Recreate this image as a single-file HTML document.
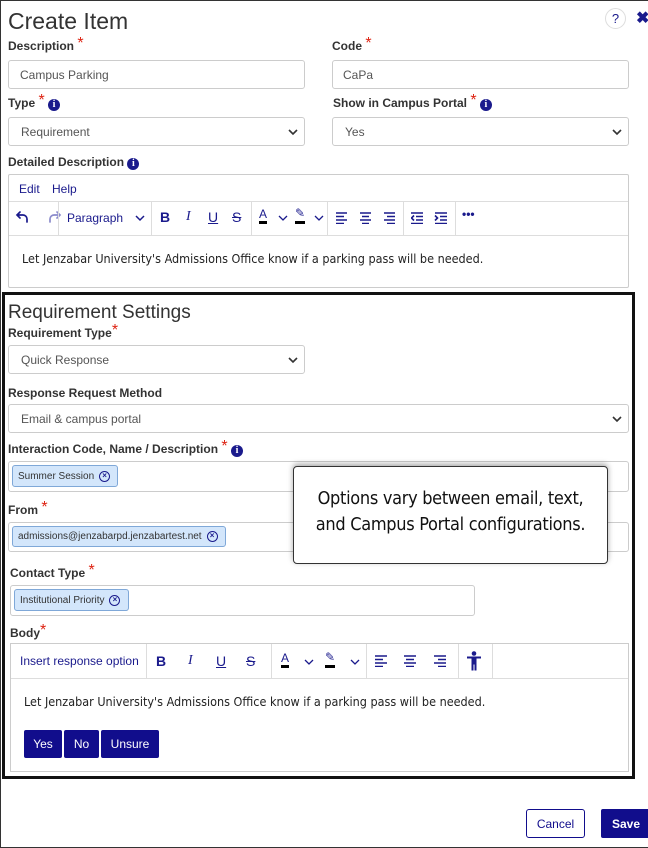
<!DOCTYPE html>
<html><head><style>
*{box-sizing:border-box;margin:0;padding:0}
body{width:648px;height:848px;position:relative;background:#fff;font-family:"Liberation Sans",Arial,sans-serif;overflow:hidden;color:#333}
.a{position:absolute}
.lbl{position:absolute;font-size:12px;font-weight:bold;color:#333}
.st{color:#d21;font-weight:normal;font-size:16px;position:relative;top:-2px;line-height:10px}
.inp{position:absolute;border:1px solid #ccc;border-radius:3px;background:#fff;font-size:12px;color:#555;padding-left:12px;display:flex;align-items:center}
.chev{position:absolute;right:6px;top:50%;margin-top:-5px}
.info{display:inline-block;width:12px;height:12px;border-radius:50%;background:#1a1a8c;color:#fff;font-size:10px;font-weight:bold;text-align:center;line-height:12px;font-family:"Liberation Serif",serif;vertical-align:0}
.chip{position:absolute;background:#d3e6fb;border:1px solid #7fa8d8;border-radius:3px;font-size:10px;color:#333;display:flex;align-items:center;padding-left:5px}
.x{display:inline-block;width:11px;height:11px;border:1.5px solid #1a1a8c;border-radius:50%;font-size:8px;line-height:8px;text-align:center;color:#1a1a8c;font-weight:bold;margin-left:5px}
.tb{position:absolute;color:#1a1a8c;font-size:14px}
.sep{position:absolute;width:1px;background:#ddd}
.btn{position:absolute;background:#110d8c;color:#fff;font-size:12px;border-radius:2px;display:flex;align-items:center;justify-content:center}
</style></head><body>
<div class="a" style="left:0;top:0;width:648px;height:848px;border:1px solid #333;border-right:none"></div>
<div class="a" style="left:8px;top:8px;font-size:23px;color:#333;font-weight:300">Create Item</div>
<div class="a" style="left:605px;top:8px;width:21px;height:21px;border:1px solid #ddd;border-radius:50%;color:#1a1a8c;font-size:13px;text-align:center;line-height:19px">?</div>
<div class="a" style="left:636px;top:8px;color:#1a1a8c;font-size:16px;font-weight:bold">✖</div>

<div class="lbl" style="left:8px;top:39px">Description <span class="st">*</span></div>
<div class="lbl" style="left:332px;top:39px">Code <span class="st">*</span></div>
<div class="inp" style="left:8px;top:60px;width:297px;height:29px;padding-left:11px">Campus Parking</div>
<div class="inp" style="left:332px;top:60px;width:297px;height:29px;padding-left:10px">CaPa</div>
<div class="lbl" style="left:8px;top:96px">Type <span class="st">*</span> <span class="info">i</span></div>
<div class="lbl" style="left:333px;top:96px">Show in Campus Portal <span class="st">*</span> <span class="info">i</span></div>
<div class="inp" style="left:8px;top:117px;width:297px;height:29px">Requirement<svg class="chev" width="10" height="10"><path d="M1 3l4 4 4-4" stroke="#333" stroke-width="1.6" fill="none"/></svg></div>
<div class="inp" style="left:332px;top:117px;width:297px;height:29px">Yes<svg class="chev" width="10" height="10"><path d="M1 3l4 4 4-4" stroke="#333" stroke-width="1.6" fill="none"/></svg></div>
<div class="lbl" style="left:8px;top:155px">Detailed Description <span class="info">i</span></div>

<div class="a" style="left:8px;top:174px;width:621px;height:114px;border:1px solid #ccc;border-radius:2px"></div>
<div class="a" style="left:9px;top:201px;width:619px;height:1px;background:#ddd"></div>
<div class="a" style="left:9px;top:235px;width:619px;height:1px;background:#ddd"></div>
<div class="a" style="left:19px;top:182px;font-size:12px;color:#1a1a8c">Edit</div>
<div class="a" style="left:52px;top:182px;font-size:12px;color:#1a1a8c">Help</div>
<svg class="a" style="left:15px;top:209px" width="60" height="16"><g fill="none" stroke-width="1.7" stroke-linecap="round"><path d="M5 3L2 6l3 3M2 6h6a4 4 0 0 1 4 4v3" stroke="#1a1a8c"/><path d="M42 3l3 3-3 3M45 6h-6a4 4 0 0 0-4 4v3" stroke="#8a8acb"/></g></svg>
<div class="sep" style="left:58px;top:202px;height:33px"></div>
<div class="tb" style="left:67px;top:211px;font-size:12px">Paragraph</div>
<svg class="a" style="left:135px;top:213px" width="10" height="10"><path d="M1 3l4 4 4-4" stroke="#1a1a8c" stroke-width="1.5" fill="none"/></svg>
<div class="sep" style="left:151px;top:202px;height:33px"></div>
<div class="tb" style="left:160px;top:209px;font-weight:bold">B</div>
<div class="tb" style="left:186px;top:209px;font-style:italic;font-family:'Liberation Serif',serif">I</div>
<div class="tb" style="left:208px;top:209px;text-decoration:underline">U</div>
<div class="tb" style="left:232px;top:209px;text-decoration:line-through">S</div>
<div class="sep" style="left:251px;top:202px;height:33px"></div>
<div class="tb" style="left:259px;top:208px;font-size:12px;border-bottom:3px solid #000;line-height:13px">A</div>
<svg class="a" style="left:278px;top:213px" width="10" height="10"><path d="M1 3l4 4 4-4" stroke="#1a1a8c" stroke-width="1.3" fill="none"/></svg>
<div class="tb" style="left:295px;top:206px;font-size:12px;border-bottom:3px solid #000;line-height:15px">✎</div>
<svg class="a" style="left:314px;top:213px" width="10" height="10"><path d="M1 3l4 4 4-4" stroke="#1a1a8c" stroke-width="1.3" fill="none"/></svg>
<div class="sep" style="left:327px;top:202px;height:33px"></div>
<svg class="a" style="left:336px;top:212px" width="60" height="12"><g stroke="#1a1a8c" stroke-width="1.6"><path d="M0 1h11M0 4.5h8M0 8h11M0 11.5h8"/><path d="M24 1h11M26 4.5h7M24 8h11M26 11.5h7"/><path d="M48 1h11M51 4.5h8M48 8h11M51 11.5h8"/></g></svg>
<div class="sep" style="left:403px;top:202px;height:33px"></div>
<svg class="a" style="left:411px;top:212px" width="40" height="12"><g stroke="#1a1a8c" stroke-width="1.6" fill="none"><path d="M0 1h12M5 4.5h7M5 8h7M0 11.5h12M3 3.5l-2.5 2.5 2.5 2.5"/><path d="M24 1h12M29 4.5h7M29 8h7M24 11.5h12M24 3.5l2.5 2.5-2.5 2.5"/></g></svg>
<div class="sep" style="left:455px;top:202px;height:33px"></div>
<div class="tb" style="left:462px;top:207px;font-size:12px;font-weight:bold">•••</div>
<div class="a" style="left:22px;top:251px;font-size:12.5px;color:#222;font-family:'DejaVu Sans Condensed','Liberation Sans',sans-serif">Let Jenzabar University's Admissions Office know if a parking pass will be needed.</div>

<div class="a" style="left:2px;top:292px;width:633px;height:487px;border:3px solid #111"></div>
<div class="a" style="left:8px;top:302px;font-size:19px;color:#333;font-weight:300">Requirement Settings</div>
<div class="lbl" style="left:8px;top:326px">Requirement Type<span class="st">*</span></div>
<div class="inp" style="left:8px;top:345px;width:297px;height:29px">Quick Response<svg class="chev" width="10" height="10"><path d="M1 3l4 4 4-4" stroke="#333" stroke-width="1.6" fill="none"/></svg></div>
<div class="lbl" style="left:8px;top:386px">Response Request Method</div>
<div class="inp" style="left:8px;top:404px;width:621px;height:29px">Email &amp; campus portal<svg class="chev" width="10" height="10"><path d="M1 3l4 4 4-4" stroke="#333" stroke-width="1.6" fill="none"/></svg></div>
<div class="lbl" style="left:8px;top:442px">Interaction Code, Name / Description <span class="st">*</span> <span class="info">i</span></div>
<div class="inp" style="left:8px;top:461px;width:621px;height:31px"></div>
<div class="chip" style="left:12px;top:465px;width:106px;height:22px">Summer Session<span class="x">×</span></div>
<div class="lbl" style="left:8px;top:503px">From <span class="st">*</span></div>
<div class="inp" style="left:8px;top:522px;width:621px;height:30px"></div>
<div class="chip" style="left:12px;top:526px;width:214px;height:21px">admissions@jenzabarpd.jenzabartest.net<span class="x">×</span></div>
<div class="lbl" style="left:10px;top:566px">Contact Type <span class="st">*</span></div>
<div class="inp" style="left:10px;top:585px;width:465px;height:31px"></div>
<div class="chip" style="left:14px;top:589px;width:115px;height:22px">Institutional Priority<span class="x">×</span></div>

<div class="a" style="left:293px;top:466px;width:315px;height:98px;border:1px solid #333;border-radius:4px;background:#fff;box-shadow:0 -2px 6px rgba(0,0,0,.35);display:flex;align-items:center;justify-content:center;text-align:center;font-size:18px;line-height:26px;color:#111;font-family:'DejaVu Sans Condensed','Liberation Sans',sans-serif;padding-bottom:6px;letter-spacing:-0.3px">Options vary between email, text,<br>and Campus Portal configurations.</div>

<div class="lbl" style="left:10px;top:626px">Body<span class="st">*</span></div>
<div class="a" style="left:10px;top:643px;width:619px;height:129px;border:1px solid #ccc"></div>
<div class="a" style="left:11px;top:678px;width:617px;height:1px;background:#ddd"></div>
<div class="a" style="left:20px;top:654px;font-size:12px;color:#1a1a8c">Insert response option</div>
<div class="sep" style="left:146px;top:644px;height:34px"></div>
<div class="tb" style="left:156px;top:653px;font-weight:bold">B</div>
<div class="tb" style="left:188px;top:653px;font-style:italic;font-family:'Liberation Serif',serif">I</div>
<div class="tb" style="left:216px;top:653px;text-decoration:underline">U</div>
<div class="tb" style="left:246px;top:653px;text-decoration:line-through">S</div>
<div class="sep" style="left:271px;top:644px;height:34px"></div>
<div class="tb" style="left:281px;top:652px;font-size:12px;border-bottom:3px solid #000;line-height:13px">A</div>
<svg class="a" style="left:304px;top:657px" width="10" height="10"><path d="M1 3l4 4 4-4" stroke="#1a1a8c" stroke-width="1.3" fill="none"/></svg>
<div class="tb" style="left:325px;top:650px;font-size:12px;border-bottom:3px solid #000;line-height:15px">✎</div>
<svg class="a" style="left:350px;top:657px" width="10" height="10"><path d="M1 3l4 4 4-4" stroke="#1a1a8c" stroke-width="1.3" fill="none"/></svg>
<div class="sep" style="left:366px;top:644px;height:34px"></div>
<svg class="a" style="left:375px;top:655px" width="75" height="12"><g stroke="#1a1a8c" stroke-width="1.6"><path d="M0 1h12M0 4.5h8M0 8h12M0 11.5h8"/><path d="M29 1h12M31 4.5h8M29 8h12M31 11.5h8"/><path d="M59 1h12M63 4.5h8M59 8h12M63 11.5h8"/></g></svg>
<div class="sep" style="left:458px;top:644px;height:34px"></div>
<svg class="a" style="left:467px;top:651px" width="14" height="20"><g fill="#1a1a8c"><circle cx="7" cy="2.5" r="2.3"/><path d="M0 5.5h14v2h-4.5v12h-2v-6h-1v6h-2v-12H0z"/></g></svg>
<div class="sep" style="left:492px;top:644px;height:34px"></div>
<div class="a" style="left:24px;top:694px;font-size:12.5px;color:#222;font-family:'DejaVu Sans Condensed','Liberation Sans',sans-serif">Let Jenzabar University's Admissions Office know if a parking pass will be needed.</div>
<div class="btn" style="left:24px;top:730px;width:38px;height:28px">Yes</div>
<div class="btn" style="left:64px;top:730px;width:35px;height:28px">No</div>
<div class="btn" style="left:101px;top:730px;width:58px;height:28px">Unsure</div>

<div class="a" style="left:526px;top:809px;width:59px;height:29px;border:1px solid #110d8c;border-radius:3px;color:#110d8c;font-size:12px;display:flex;align-items:center;justify-content:center">Cancel</div>
<div class="btn" style="left:601px;top:809px;width:50px;height:29px;font-weight:bold">Save</div>
</body></html>
